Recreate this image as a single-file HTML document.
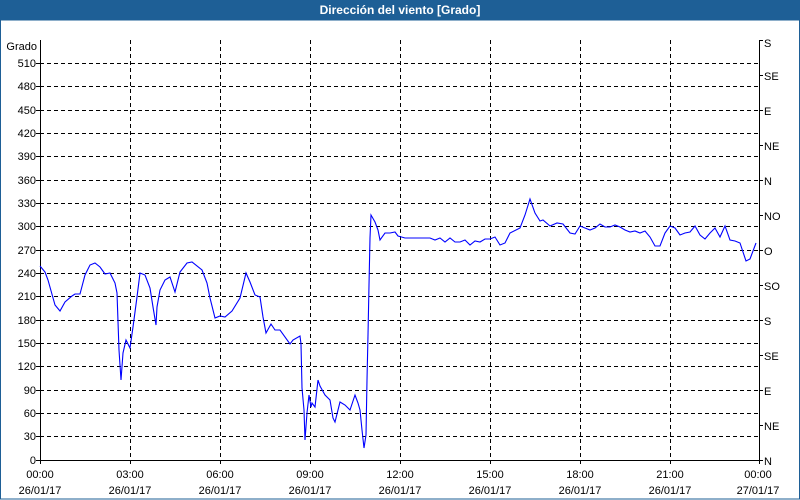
<!DOCTYPE html>
<html><head><meta charset="utf-8"><style>
html,body{margin:0;padding:0;background:#fff;}
body{width:800px;height:500px;overflow:hidden;position:relative;font-family:"Liberation Sans","DejaVu Sans",sans-serif;}
</style></head><body>
<svg width="800" height="500" xmlns="http://www.w3.org/2000/svg" style="position:absolute;left:0;top:0" font-family="Liberation Sans, DejaVu Sans, sans-serif" font-size="11">
<rect x="0" y="0" width="800" height="500" fill="#fff"/>
<rect x="0" y="0" width="800" height="20" fill="#1e5f96"/>
<rect x="0.5" y="20" width="799" height="479" fill="none" stroke="#1e5f96" stroke-width="1"/>
<text x="400" y="14" text-anchor="middle" fill="#fff" font-weight="bold" font-size="12">Dirección del viento [Grado]</text>
<g stroke="#000" stroke-width="1" stroke-dasharray="4,3" fill="none">
<path d="M40,63.5H758M40,86.5H758M40,110.5H758M40,133.5H758M40,156.5H758M40,180.5H758M40,203.5H758M40,226.5H758M40,250.5H758M40,273.5H758M40,296.5H758M40,320.5H758M40,343.5H758M40,366.5H758M40,390.5H758M40,413.5H758M40,436.5H758"/>
<path d="M130.5,40V460M220.5,40V460M310.5,40V460M400.5,40V460M490.5,40V460M580.5,40V460M670.5,40V460"/>
</g>
<path d="M40.5,40V460.5H759.5V40" fill="none" stroke="#000"/>
<g stroke="#000">
<path d="M36,63.5h4M36,86.5h4M36,110.5h4M36,133.5h4M36,156.5h4M36,180.5h4M36,203.5h4M36,226.5h4M36,250.5h4M36,273.5h4M36,296.5h4M36,320.5h4M36,343.5h4M36,366.5h4M36,390.5h4M36,413.5h4M36,436.5h4M36,460.5h4"/>
<path d="M40.5,460v4M130.5,460v4M220.5,460v4M310.5,460v4M400.5,460v4M490.5,460v4M580.5,460v4M670.5,460v4M759.5,460v4"/>
<path d="M759,40.5h4M759,75.5h4M759,110.5h4M759,145.5h4M759,180.5h4M759,215.5h4M759,250.5h4M759,285.5h4M759,320.5h4M759,355.5h4M759,390.5h4M759,425.5h4M759,460.5h4"/>
</g>
<g text-anchor="end" fill="#000">
<text x="37" y="50">Grado</text>
<text x="36" y="67">510</text><text x="36" y="90">480</text><text x="36" y="114">450</text><text x="36" y="137">420</text><text x="36" y="160">390</text><text x="36" y="184">360</text><text x="36" y="207">330</text><text x="36" y="230">300</text><text x="36" y="254">270</text><text x="36" y="277">240</text><text x="36" y="300">210</text><text x="36" y="324">180</text><text x="36" y="347">150</text><text x="36" y="370">120</text><text x="36" y="394">90</text><text x="36" y="417">60</text><text x="36" y="440">30</text><text x="36" y="464">0</text>
</g>
<g fill="#000">
<text x="764" y="47">S</text><text x="764" y="80">SE</text><text x="764" y="115">E</text><text x="764" y="150">NE</text><text x="764" y="185">N</text><text x="764" y="220">NO</text><text x="764" y="255">O</text><text x="764" y="290">SO</text><text x="764" y="325">S</text><text x="764" y="360">SE</text><text x="764" y="395">E</text><text x="764" y="430">NE</text><text x="764" y="465">N</text>
</g>
<g text-anchor="middle" fill="#000">
<text x="40" y="478">00:00</text><text x="40" y="494">26/01/17</text>
<text x="130" y="478">03:00</text><text x="130" y="494">26/01/17</text>
<text x="220" y="478">06:00</text><text x="220" y="494">26/01/17</text>
<text x="310" y="478">09:00</text><text x="310" y="494">26/01/17</text>
<text x="400" y="478">12:00</text><text x="400" y="494">26/01/17</text>
<text x="490" y="478">15:00</text><text x="490" y="494">26/01/17</text>
<text x="580" y="478">18:00</text><text x="580" y="494">26/01/17</text>
<text x="670" y="478">21:00</text><text x="670" y="494">26/01/17</text>
<text x="758" y="478">00:00</text><text x="758" y="494">27/01/17</text>
</g>
<polyline fill="none" stroke="#0000ff" stroke-width="1.1" points="40,266 45,272 48,280 55,305 60,311 65,302 72,296 75,294 80,294 85,275 90,265 95,263 100,267 105,274 110,273 115,283 117,293 119,350 121,380 123,353 126,340 130,348 133,327 137,297 140,273 145,275 150,288 153,307 156,325 157,307 160,290 165,280 170,277 175,292 180,272 187,263 192,262 202,270 207,283 210,298 215,318 220,316 225,317 232,311 240,298 246,273 250,282 255,295 260,297 263,317 266,333 271,324 275,330 280,330 290,344 293,340 300,336 301,344 302,388 304,410 305,440 307,413 309,395 311,407 312,403 315,407 318,380 320,386 325,395 330,400 333,418 335,422 340,402 345,405 350,410 355,395 358,403 360,410 362,430 364,448 366,435 367,380 368,335 369,285 370,238 371,215 375,222 378,230 380,240 385,233 390,233 395,232 398,236 405,238 420,238 430,238 435,240 440,238 445,242 450,238 455,242 460,242 465,240 470,245 475,241 480,242 485,239 490,239 495,237 500,245 505,243 510,233 520,228 525,215 530,199 535,213 540,221 543,220 550,226 557,223 563,224 570,233 575,234 580,226 585,228 590,230 595,228 600,224 605,227 610,227 615,225 620,227 625,230 630,232 635,231 640,233 645,231 650,237 655,246 660,246 665,233 670,226 675,228 680,235 685,233 690,232 695,226 700,235 705,239 710,233 715,228 720,237 725,226 730,240 735,241 740,243 746,261 750,259 756,243"/>
</svg>
</body></html>
